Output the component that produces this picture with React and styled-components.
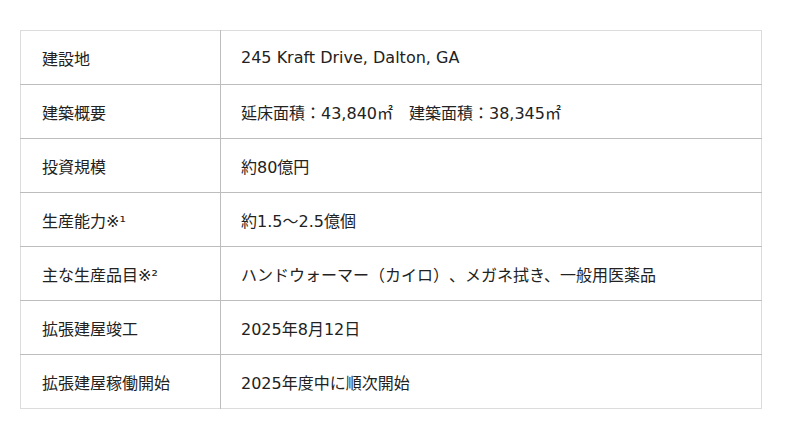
import React from "react";
import styled, { createGlobalStyle } from "styled-components";

const Global = createGlobalStyle`
  html, body { margin: 0; padding: 0; background: #fff; }
  body {
    font-family: "DejaVu Sans", "Noto Sans CJK JP", sans-serif;
    text-spacing-trim: space-all;
  }
`;

const Page = styled.div`
  padding: 30px 38px 0 20px;
`;

const Table = styled.table`
  width: 742px;
  border-collapse: collapse;
  border: 1px solid #dcdcdc;
  font-size: 16px;
  color: #222;
  text-spacing-trim: space-all;
`;

const Row = styled.tr`
  height: 54px;
  & + & td { border-top: 1px solid #bdbdbd; }
`;

const Head = styled.td`
  width: 200px;
  box-sizing: border-box;
  padding: 0 0 0 21px;
  border-right: 1px solid #bdbdbd;
  vertical-align: middle;
`;

const Cell = styled.td`
  padding: 0 0 0 20px;
  vertical-align: middle;
`;

const rows = [
  ["建設地", "245 Kraft Drive, Dalton, GA"],
  ["建築概要", "延床面積：43,840㎡　建築面積：38,345㎡"],
  ["投資規模", "約80億円"],
  ["生産能力※¹", "約1.5～2.5億個"],
  ["主な生産品目※²", "ハンドウォーマー（カイロ）、メガネ拭き、一般用医薬品"],
  ["拡張建屋竣工", "2025年8月12日"],
  ["拡張建屋稼働開始", "2025年度中に順次開始"],
];

export default function App() {
  return (
    <>
      <Global />
      <Page>
        <Table>
          <tbody>
            {rows.map(([h, v]) => (
              <Row key={h}>
                <Head>{h}</Head>
                <Cell>{v}</Cell>
              </Row>
            ))}
          </tbody>
        </Table>
      </Page>
    </>
  );
}
